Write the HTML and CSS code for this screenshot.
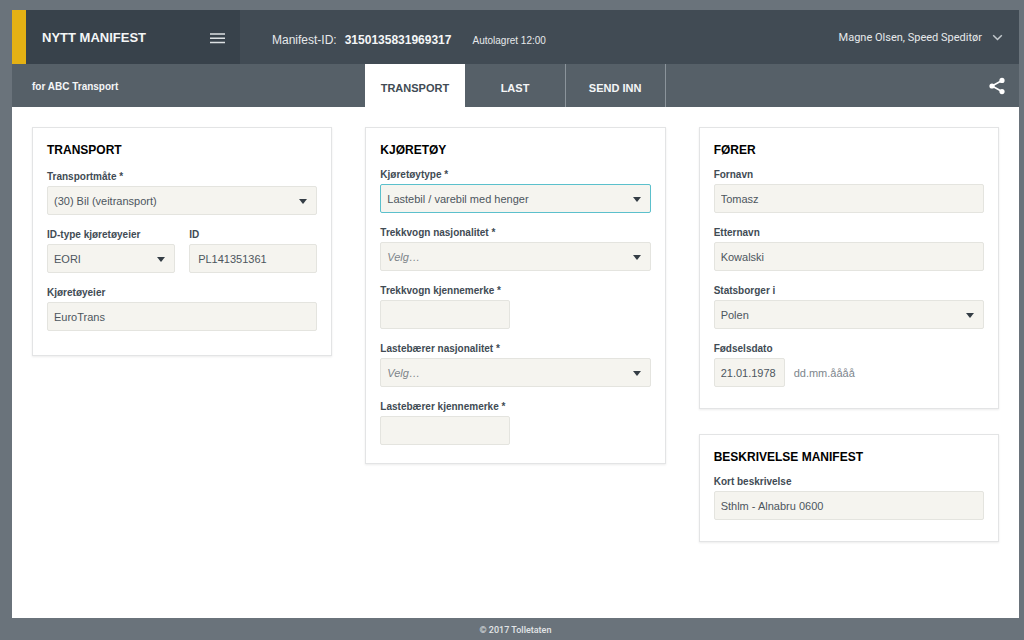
FILE: index.html
```
<!DOCTYPE html>
<html lang="no">
<head>
<meta charset="utf-8">
<meta name="viewport" content="width=device-width, initial-scale=1">
<title>Nytt manifest</title>
<link rel="stylesheet" href="styles.css">
</head>
<body>
<div class="app">
  <header class="header">
    <div class="brand">
      <h1 class="brand-title">NYTT MANIFEST</h1>
      <button class="icon-button" type="button" aria-label="Meny">
        <svg width="15" height="11" viewBox="0 0 15 11"><path d="M0 1h15M0 5.3h15M0 9.6h15" stroke="#dde1e4" stroke-width="1.5" fill="none"/></svg>
      </button>
    </div>
    <p class="manifest"><span>Manifest-ID:</span><strong>3150135831969317</strong><small class="saved">Autolagret 12:00</small></p>
    <button class="user" type="button">Magne Olsen, Speed Speditør
      <svg width="11" height="7" viewBox="0 0 11 7"><path d="M1.2 1.2L5.5 5.5L9.8 1.2" stroke="#c3c9cd" stroke-width="1.5" fill="none"/></svg>
    </button>
  </header>
  <div class="subbar">
    <p class="company">for ABC Transport</p>
    <nav class="tabs">
      <a class="tab tab-active" href="#transport">TRANSPORT</a>
      <a class="tab" href="#last">LAST</a>
      <a class="tab" href="#send">SEND INN</a>
    </nav>
    <button class="icon-button share" type="button" aria-label="Del">
      <svg width="16" height="18" viewBox="0 0 16 18"><path d="M13 3.5L3 9L13 14.5" stroke="#fff" stroke-width="1.6" fill="none"/><circle cx="13" cy="3.4" r="2.6" fill="#fff"/><circle cx="3" cy="9" r="2.6" fill="#fff"/><circle cx="13" cy="14.6" r="2.6" fill="#fff"/></svg>
    </button>
  </div>
  <main class="content">
    <section class="card card-transport">
      <h2 class="card-title">TRANSPORT</h2>
      <div class="field">
        <label class="label" for="mode">Transportmåte *</label>
        <div class="select"><select class="control" id="mode"><option>(30) Bil (veitransport)</option></select></div>
      </div>
      <div class="pair">
        <div class="field">
          <label class="label" for="idtype">ID-type kjøretøyeier</label>
          <div class="select"><select class="control" id="idtype"><option>EORI</option></select></div>
        </div>
        <div class="field">
          <label class="label" for="ownerid">ID</label>
          <input class="control control-inset" id="ownerid" type="text" value="PL141351361">
        </div>
      </div>
      <div class="field">
        <label class="label" for="owner">Kjøretøyeier</label>
        <input class="control" id="owner" type="text" value="EuroTrans">
      </div>
    </section>
    <section class="card card-vehicle">
      <h2 class="card-title">KJØRETØY</h2>
      <div class="field">
        <label class="label" for="vtype">Kjøretøytype *</label>
        <div class="select"><select class="control control-current" id="vtype"><option>Lastebil / varebil med henger</option></select></div>
      </div>
      <div class="field">
        <label class="label" for="tnat">Trekkvogn nasjonalitet *</label>
        <div class="select"><select class="control control-empty" id="tnat"><option>Velg…</option></select></div>
      </div>
      <div class="field">
        <label class="label" for="tplate">Trekkvogn kjennemerke *</label>
        <input class="control control-plate" id="tplate" type="text">
      </div>
      <div class="field">
        <label class="label" for="lnat">Lastebærer nasjonalitet *</label>
        <div class="select"><select class="control control-empty" id="lnat"><option>Velg…</option></select></div>
      </div>
      <div class="field">
        <label class="label" for="lplate">Lastebærer kjennemerke *</label>
        <input class="control control-plate" id="lplate" type="text">
      </div>
    </section>
    <div class="stack">
      <section class="card">
        <h2 class="card-title">FØRER</h2>
        <div class="field">
          <label class="label" for="first">Fornavn</label>
          <input class="control" id="first" type="text" value="Tomasz">
        </div>
        <div class="field">
          <label class="label" for="last-name">Etternavn</label>
          <input class="control" id="last-name" type="text" value="Kowalski">
        </div>
        <div class="field">
          <label class="label" for="citizen">Statsborger i</label>
          <div class="select"><select class="control" id="citizen"><option>Polen</option></select></div>
        </div>
        <div class="field">
          <label class="label" for="born">Fødselsdato</label>
          <div class="date"><input class="control control-date" id="born" type="text" value="21.01.1978"><span class="hint">dd.mm.åååå</span></div>
        </div>
      </section>
      <section class="card">
        <h2 class="card-title">BESKRIVELSE MANIFEST</h2>
        <div class="field">
          <label class="label" for="desc">Kort beskrivelse</label>
          <input class="control" id="desc" type="text" value="Sthlm - Alnabru 0600">
        </div>
      </section>
    </div>
  </main>
  <footer class="footer">© 2017 Tolletaten</footer>
</div>
</body>
</html>
```
FILE: styles.css
```
* { box-sizing: border-box; }

body {
  margin: 0;
  background: #6a737b;
  color: #414b54;
  font-family: "Liberation Sans", Arial, sans-serif;
  font-size: 11px;
}

h1, h2, p { margin: 0; }

.app {
  display: flex;
  flex-direction: column;
  min-height: 100vh;
  padding: 10px 5px 0 12px;
}

.header {
  display: flex;
  align-items: stretch;
  height: 54px;
  background: #414b54;
  color: #e6e9eb;
}

.brand {
  display: flex;
  align-items: center;
  justify-content: space-between;
  width: 228px;
  padding: 2px 15px 0 16px;
  border-left: 14px solid #e4b114;
  background: #38424b;
}

.brand-title {
  color: #f4f6f7;
  font-size: 13px;
  line-height: 16px;
}

.icon-button {
  display: flex;
  padding: 0;
  border: 0;
  background: none;
}

.manifest {
  display: flex;
  align-items: center;
  gap: 8px;
  padding: 6px 0 0 32px;
  font-size: 12px;
}

.manifest strong { color: #f4f6f7; }

.saved {
  margin-left: 13px;
  font-size: 10px;
}

.user {
  display: flex;
  align-items: center;
  gap: 10px;
  margin-left: auto;
  padding: 0 16px 0 0;
  border: 0;
  background: none;
  color: #e6e9eb;
  font-family: Roboto, sans-serif;
  font-size: 11px;
}

.subbar,
.content {
  display: grid;
  grid-template-columns: repeat(3, 1fr);
  gap: 33px;
  padding: 0 20px;
}

.subbar {
  height: 43px;
  background: #566068;
  color: #f4f6f7;
  font-weight: bold;
}

.company {
  align-self: center;
  padding-top: 2px;
  font-size: 10px;
}

.tabs { display: flex; }

.tab {
  display: flex;
  flex: 1;
  align-items: center;
  justify-content: center;
  padding-top: 4px;
  border-right: 1px solid #8b949b;
  color: #f4f6f7;
  font-size: 11px;
  text-decoration: none;
}

.tab-active {
  border-color: #fff;
  background: #fff;
  color: #414b54;
}

.share {
  align-self: center;
  justify-self: end;
  margin-right: -6px;
}

.content {
  flex: 1;
  align-items: start;
  padding-top: 20px;
  padding-bottom: 20px;
  background: #fff;
}

.stack {
  display: grid;
  gap: 25px;
}

.card {
  display: flex;
  flex-direction: column;
  gap: 13px;
  padding: 14px 14px 21px;
  border: 1px solid #e3e4e5;
  box-shadow: 0 1px 2px rgba(0, 0, 0, 0.08);
}

.card-title {
  margin-bottom: -3px;
  color: #000;
  font-size: 12px;
  line-height: 16px;
}

.card-transport { padding-bottom: 24px; }

.card-transport .card-title { margin-bottom: -1px; }

.card-vehicle { padding-bottom: 18px; }

.field { min-width: 0; }

.pair {
  display: grid;
  grid-template-columns: 1fr 1fr;
  gap: 14px;
}

.label {
  display: block;
  margin-bottom: 2px;
  font-size: 10px;
  font-weight: bold;
  line-height: 14px;
}

.select { position: relative; }

.select::after {
  content: "";
  position: absolute;
  top: 13px;
  right: 10px;
  border: 4px solid transparent;
  border-top: 5px solid #343d45;
  border-bottom: 0;
  pointer-events: none;
}

.control {
  display: block;
  width: 100%;
  height: 29px;
  padding: 0 6px;
  border: 1px solid #e4e4df;
  border-radius: 2px;
  outline: 0;
  appearance: none;
  background: #f5f4ef;
  color: #4d565e;
  font: 11px "Liberation Sans", Arial, sans-serif;
}

.control-inset { padding-left: 8px; }

.control-current { border-color: #5bc0cc; }

.control-empty {
  color: #7d848a;
  font-style: italic;
}

.control-plate { width: 130px; }

.control-date { width: 71px; }

.date {
  display: flex;
  align-items: center;
  gap: 9px;
}

.hint {
  color: #7d868d;
  font-size: 11px;
}

.footer {
  padding: 6px 0 4px;
  color: #e2e5e7;
  font: 500 9px/12px Roboto, sans-serif;
  text-align: center;
}
```
